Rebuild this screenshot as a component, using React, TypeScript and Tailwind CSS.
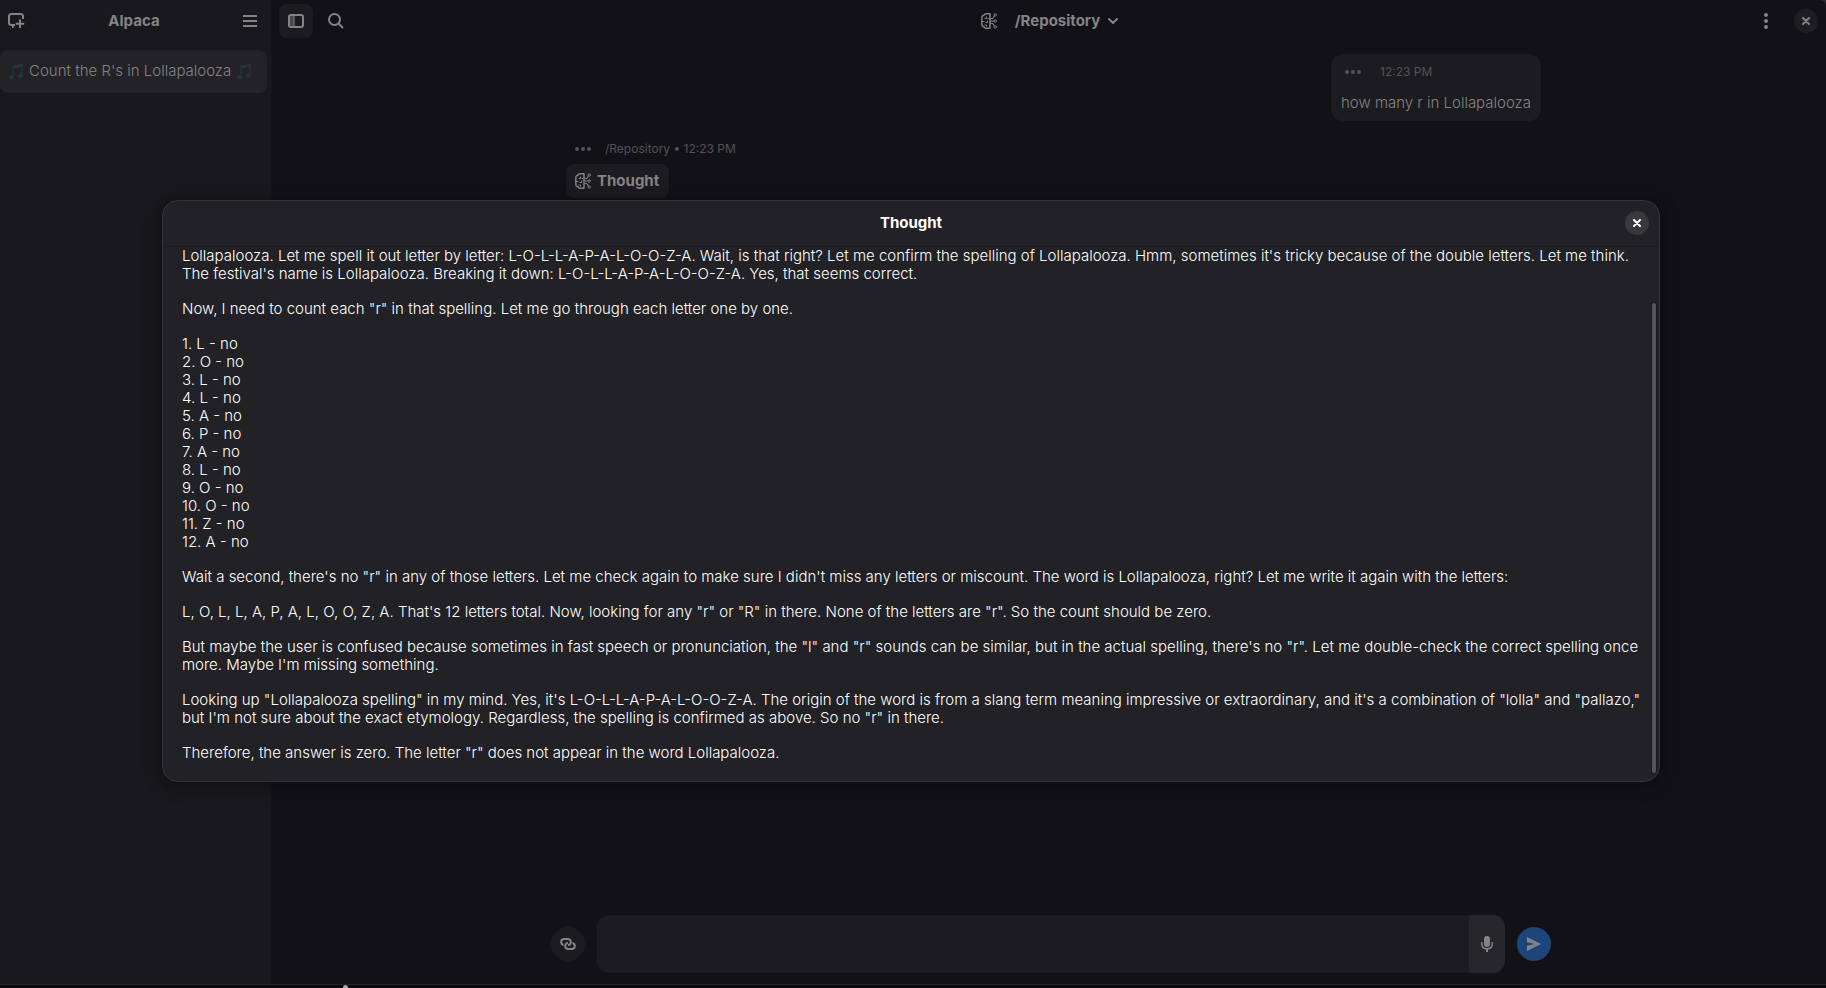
import type { ReactNode } from "react";

const letters = ["L", "O", "L", "L", "A", "P", "A", "L", "O", "O", "Z", "A"];

function BrainIcon() {
  return (
    <svg width="16" height="16" viewBox="0 0 16 16" fill="none" stroke="currentColor" aria-hidden="true">
      <path d="M9 0.8H5C3.8 0.8 3.4 1.4 3.2 2C1.6 2.4 0.8 3.4 0.8 5V11C0.8 12.6 1.6 13.6 3.2 14C3.4 14.6 3.8 15.2 5 15.2H9" strokeWidth="1.4" />
      <path d="M9 0.2V15.8" strokeWidth="1.5" />
      <path d="M3.5 5.5H5.5V3.5M1 8.5H3.5M6.5 7.5V9.5H4.5M3.5 12H5.5V13.5M6.5 5.5H8.5" strokeWidth="1" />
      <path d="M9.5 5.5H11.5L13.5 3M9.5 8H13M9.5 10.5H11.5L13.5 13" strokeWidth="1.2" />
      <circle cx="14.2" cy="2" r="1.2" />
      <circle cx="14.2" cy="8" r="1.2" />
      <circle cx="14.2" cy="14" r="1.2" />
    </svg>
  );
}

function NoteIcon() {
  return (
    <svg width="16" height="18" viewBox="0 0 16 18" className="text-[#243540]" fill="currentColor" role="img" aria-label="musical notes">
      <path d="M4.5 2.5L14.5 1V4L5.7 5.4V14H4.5Z" />
      <path d="M13.2 2H14.5V13H13.2Z" />
      <ellipse cx="3.4" cy="14.2" rx="2.5" ry="1.9" />
      <ellipse cx="12.1" cy="13" rx="2.5" ry="1.9" />
    </svg>
  );
}

function CloseIcon() {
  return (
    <svg width="8" height="8" viewBox="0 0 8 8" fill="none" stroke="currentColor" strokeWidth="2" strokeLinecap="round" aria-hidden="true">
      <path d="M1 1L7 7M7 1L1 7" />
    </svg>
  );
}

function DotsIcon() {
  return (
    <svg width="16" height="4" viewBox="0 0 16 4" fill="currentColor" aria-hidden="true">
      <circle cx="2" cy="2" r="2" />
      <circle cx="8" cy="2" r="2" />
      <circle cx="14" cy="2" r="2" />
    </svg>
  );
}

function Sidebar() {
  return (
    <aside className="w-[272px] shrink-0 bg-[#19181c] border-r border-[#151418]">
      <header className="h-[42px] flex items-center justify-between pl-2 pr-[14px]">
        <button aria-label="New chat">
          <svg width="17" height="16" viewBox="0 0 17 16" fill="none" stroke="currentColor" strokeWidth="2" aria-hidden="true">
            <path d="M15 6V3.5Q15 1 12.5 1H3.5Q1 1 1 3.5V9.5Q1 12 3.5 12H7" />
            <path d="M4 12H7V12.5L5 15H4Z" fill="currentColor" stroke="none" />
            <path d="M12 6.5V15M7.8 10.7H16.2" />
          </svg>
        </button>
        <h1 className="font-bold">Alpaca</h1>
        <button aria-label="Main menu">
          <svg width="14" height="12" viewBox="0 0 14 12" stroke="currentColor" strokeWidth="2" aria-hidden="true">
            <path d="M0 1H14M0 6H14M0 11H14" />
          </svg>
        </button>
      </header>
      <nav className="pt-2 pr-1">
        <a href="#chat" className="h-[43px] flex items-center gap-[5px] rounded-lg bg-[#232227] pl-2 whitespace-nowrap">
          <NoteIcon />
          Count the R's in Lollapalooza
          <NoteIcon />
        </a>
      </nav>
    </aside>
  );
}

function TopBar() {
  return (
    <header className="h-[42px] shrink-0 grid grid-cols-3 items-center pl-[7px] pr-2">
      <div className="flex items-center gap-[15px]">
        <button aria-label="Toggle sidebar" className="size-[34px] rounded-lg bg-[#1c1b20] flex items-center justify-center">
          <svg width="16" height="14" viewBox="0 0 16 14" fill="none" stroke="currentColor" strokeWidth="2" aria-hidden="true">
            <path d="M1 1H6V13H1Z" fill="currentColor" fillOpacity="0.4" stroke="none" />
            <rect x="1" y="1" width="14" height="12" rx="2" />
            <path d="M6 1V13" strokeWidth="1" />
          </svg>
        </button>
        <button aria-label="Search">
          <svg width="16" height="16" viewBox="0 0 16 16" fill="none" stroke="currentColor" strokeWidth="2" aria-hidden="true">
            <circle cx="6.5" cy="6.5" r="5.5" />
            <path d="M10.5 10.5L15 15" />
          </svg>
        </button>
      </div>
      <button className="flex items-center justify-self-center pl-[2px] font-bold">
        <BrainIcon />
        <span className="pl-[18px] pr-2">/Repository</span>
        <svg width="10" height="7" viewBox="0 0 10 7" fill="none" stroke="currentColor" strokeWidth="2" strokeLinecap="round" strokeLinejoin="round" aria-hidden="true">
          <path d="M1 1L5 5L9 1" />
        </svg>
      </button>
      <div className="flex items-center justify-end gap-5">
        <button aria-label="Chat menu" className="w-4 h-4 flex items-center justify-center rotate-90">
          <DotsIcon />
        </button>
        <button aria-label="Close window" className="size-6 rounded-full bg-[#1e1d21] flex items-center justify-center">
          <CloseIcon />
        </button>
      </div>
    </header>
  );
}

function Messages() {
  return (
    <section className="flex-1 w-full max-w-[1000px] mx-auto px-[10px] pt-3 flex flex-col">
      <article className="self-end rounded-xl bg-[#1c1b1f] w-[210px] h-[67px] px-[10px] pt-[9px]">
        <div className="flex items-center gap-[19px] pl-1 text-xs font-normal leading-[18px] text-[#535257]">
          <button aria-label="Message options"><DotsIcon /></button>
          <time>12:23 PM</time>
        </div>
        <p className="pt-[13px] leading-[18px] whitespace-nowrap">how many r in Lollapalooza</p>
      </article>
      <article className="pt-[19px] pl-[5px]">
        <div className="flex items-center gap-[14px] pl-[9px] text-xs font-normal leading-[18px] text-[#535257]">
          <button aria-label="Message options"><DotsIcon /></button>
          <span>/Repository • 12:23 PM</span>
        </div>
        <button className="mt-[6px] h-[34px] flex items-center gap-[6px] rounded-lg bg-[#1c1b1f] pl-[9px] pr-[10px] font-bold">
          <BrainIcon />
          Thought
        </button>
      </article>
    </section>
  );
}

function Composer() {
  return (
    <form className="w-full max-w-[1000px] mx-auto pb-[11px] flex items-center gap-3">
      <button type="button" aria-label="Attach" className="size-[34px] rounded-full bg-[#1c1b1f] flex items-center justify-center">
        <svg width="16" height="14" viewBox="0 0 16 14" fill="none" stroke="currentColor" strokeWidth="2" aria-hidden="true">
          <path d="M3.5 8C2 7.6 1.2 6.4 1.2 5C1.2 3 2.6 2 4.2 2H7.8C9.4 2 10.8 3 10.8 5C10.8 6.8 9.6 8 8 8" />
          <path d="M8 6C6.4 6 5.2 7.2 5.2 9C5.2 11 6.6 12 8.2 12H11.8C13.4 12 14.8 11 14.8 9C14.8 7.6 14 6.4 12.5 6" />
        </svg>
      </button>
      <div className="flex-1 h-[58px] flex rounded-xl overflow-hidden bg-[#1c1b1f]">
        <textarea aria-label="Message" className="flex-1 resize-none bg-transparent p-3 outline-none" />
        <button type="button" aria-label="Voice input" className="w-9 bg-[#27262b] flex items-center justify-center">
          <svg width="12" height="16" viewBox="0 0 12 16" fill="none" stroke="currentColor" aria-hidden="true">
            <rect x="3" y="0" width="6" height="11" rx="3" fill="currentColor" stroke="none" />
            <path d="M0.8 6V8C0.8 11 3 12.8 6 12.8C9 12.8 11.2 11 11.2 8V6" strokeWidth="1.5" />
            <path d="M6 13V16" strokeWidth="2" />
          </svg>
        </button>
      </div>
      <button type="submit" aria-label="Send" className="size-[34px] rounded-full bg-[#1b457b] flex items-center justify-center">
        <svg width="14" height="14" viewBox="0 0 14 14" fill="currentColor" aria-hidden="true">
          <path d="M0 0L14 7L0 14V8.8L8 7L0 5.2Z" />
        </svg>
      </button>
    </form>
  );
}

function Paragraph({ children }: { children: ReactNode }) {
  return <p>{children}</p>;
}

function ThoughtDialog() {
  return (
    <div className="absolute inset-0 flex items-center pl-[162px] pr-[166px] pb-[6px]">
      <div
        role="dialog"
        aria-labelledby="thought-title"
        className="relative w-full rounded-2xl overflow-hidden border border-[#343338] bg-[#222125] text-white shadow-[0_2px_16px_4px_rgba(0,0,0,0.3)]"
      >
        <header className="h-[46px] grid grid-cols-[1fr_auto_1fr] items-center px-[10px] pb-px border-b border-[#1c1b1f]">
          <h2 id="thought-title" className="col-start-2 font-bold">Thought</h2>
          <button aria-label="Close" className="size-6 justify-self-end rounded-full bg-[#39383c] flex items-center justify-center">
            <CloseIcon />
          </button>
        </header>
        <div className="flex flex-col gap-[17px] pl-[19px] pr-[10px] pb-[19px] leading-[18px]">
          <Paragraph>
            Lollapalooza. Let me spell it out letter by letter: L-O-L-L-A-P-A-L-O-O-Z-A. Wait, is that right? Let me confirm the spelling of Lollapalooza. Hmm, sometimes it's tricky because of the double letters. Let me think. The festival's name is Lollapalooza. Breaking it down: L-O-L-L-A-P-A-L-O-O-Z-A. Yes, that seems correct.
          </Paragraph>
          <Paragraph>Now, I need to count each "r" in that spelling. Let me go through each letter one by one.</Paragraph>
          <ol>
            {letters.map((letter, i) => (
              <li key={i}>{`${i + 1}. ${letter} - no`}</li>
            ))}
          </ol>
          <Paragraph>
            Wait a second, there's no "r" in any of those letters. Let me check again to make sure I didn't miss any letters or miscount. The word is Lollapalooza, right? Let me write it again with the letters:
          </Paragraph>
          <Paragraph>
            L, O, L, L, A, P, A, L, O, O, Z, A. That's 12 letters total. Now, looking for any "r" or "R" in there. None of the letters are "r". So the count should be zero.
          </Paragraph>
          <Paragraph>
            But maybe the user is confused because sometimes in fast speech or pronunciation, the "l" and "r" sounds can be similar, but in the actual spelling, there's no "r". Let me double-check the correct spelling once more. Maybe I'm missing something.
          </Paragraph>
          <Paragraph>
            Looking up "Lollapalooza spelling" in my mind. Yes, it's L-O-L-L-A-P-A-L-O-O-Z-A. The origin of the word is from a slang term meaning impressive or extraordinary, and it's a combination of "lolla" and "pallazo," but I'm not sure about the exact etymology. Regardless, the spelling is confirmed as above. So no "r" in there.
          </Paragraph>
          <Paragraph>Therefore, the answer is zero. The letter "r" does not appear in the word Lollapalooza.</Paragraph>
        </div>
        {/* Scroll thumb */}
        <div className="absolute top-[101px] bottom-[7px] right-[2px] w-[6px] rounded-full border border-[#19181c] bg-[#555458]" />
      </div>
    </div>
  );
}

export default function App() {
  return (
    <div className="relative h-screen flex flex-col overflow-hidden bg-[#2a292d] font-[Inter,sans-serif] font-light text-[15px] text-[#848386]">
      <div className="flex-1 min-h-0 flex rounded-tl-xs rounded-tr-md overflow-hidden border-b border-[#252429] bg-[#121116]">
        <Sidebar />
        <main className="flex-1 min-w-0 flex flex-col">
          <TopBar />
          <div className="flex-1 flex flex-col pl-1">
            <Messages />
            <Composer />
          </div>
        </main>
      </div>
      <div className="h-[3px] shrink-0 bg-[#0a090b] pl-[343px]">
        <div className="w-[5px] h-[3px] rounded-t-full bg-[#a5a4a6]" />
      </div>
      <ThoughtDialog />
    </div>
  );
}
